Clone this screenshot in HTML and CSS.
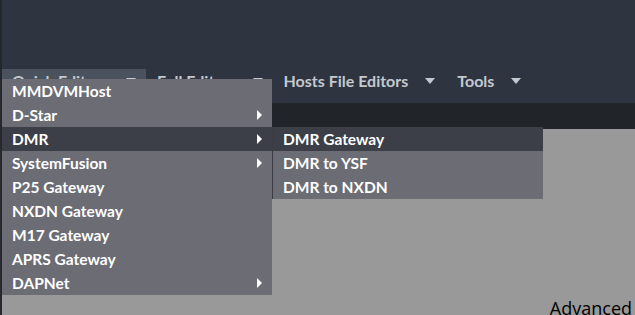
FILE: index.html
```html
<!DOCTYPE html>
<html>
<head>
<meta charset="utf-8">
<link rel="stylesheet" href="styles.css">
</head>
<body>
<div class="page">
  <div class="strip"></div>
  <div class="main">
    <div class="header"></div>
    <nav class="nav">
      <div class="nav-item active">Quick Editors <span class="caret"></span></div>
      <div class="nav-item">Full Editors <span class="caret"></span></div>
      <div class="nav-item">Hosts File Editors <span class="caret"></span></div>
      <div class="nav-item">Tools <span class="caret"></span></div>
    </nav>
    <div class="band"></div>
    <div class="content">
      <div class="advanced">Advanced</div>
    </div>
  </div>
</div>
<ul class="menu">
  <li>MMDVMHost</li>
  <li>D-Star <span class="arrow"></span></li>
  <li class="hl">DMR <span class="arrow"></span></li>
  <li>SystemFusion <span class="arrow"></span></li>
  <li>P25 Gateway</li>
  <li>NXDN Gateway</li>
  <li>M17 Gateway</li>
  <li>APRS Gateway</li>
  <li>DAPNet <span class="arrow"></span></li>
</ul>
<ul class="menu sub">
  <li class="hl">DMR Gateway</li>
  <li>DMR to YSF</li>
  <li>DMR to NXDN</li>
</ul>
</body>
</html>
```
FILE: styles.css
```css
html, body {
  margin: 0;
  padding: 0;
  width: 635px;
  height: 315px;
  overflow: hidden;
  font-family: "Lato", "Noto Sans", sans-serif;
}
.page {
  display: flex;
  height: 315px;
}
.strip {
  width: 2px;
  background: #25282d;
}
.main {
  flex: 1;
  display: flex;
  flex-direction: column;
}
.header {
  height: 69px;
  background: #2e3540;
}
.nav {
  height: 34px;
  background: #2e3540;
  display: flex;
}
.nav-item {
  display: flex;
  align-items: center;
  padding: 0 10px;
  color: #c3c9cf;
  font-weight: 700;
  font-size: 16px;
  height: 23px;
  white-space: nowrap;
}
.nav-item:nth-child(2) { padding-left: 11px; }
.nav-item:nth-child(4) { padding-left: 12px; }
.nav-item.active {
  background: #4a525d;
  width: 124px;
  justify-content: space-between;
}
.caret {
  display: inline-block;
  width: 0;
  height: 0;
  border-left: 5px solid transparent;
  border-right: 5px solid transparent;
  border-top: 6px solid #c3c9cf;
  margin-left: 17px;
}
.band {
  height: 26px;
  background: #212429;
}
.content {
  flex: 1;
  background: #999999;
  display: flex;
  justify-content: flex-end;
  align-items: flex-end;
}
.advanced {
  font-family: "Open Sans", "Noto Sans", sans-serif;
  font-size: 18px;
  color: #000;
  line-height: 20px;
  margin-right: 3px;
  margin-bottom: -3px;
}
.menu {
  position: absolute;
  left: 2px;
  top: 79px;
  width: 270px;
  margin: 0;
  padding: 0;
  list-style: none;
  background: #6c6c74;
}
.menu li {
  height: 24px;
  display: flex;
  align-items: center;
  justify-content: space-between;
  padding: 0 10px;
  color: #fff;
  font-weight: 700;
  font-size: 15.5px;
}
.menu li.hl {
  background: #3c3f48;
}
.menu.sub {
  left: 272px;
  top: 127px;
  width: 270px;
  border-left: 1px solid #3a3d44;
}
.arrow {
  display: inline-block;
  width: 0;
  height: 0;
  border-top: 5px solid transparent;
  border-bottom: 5px solid transparent;
  border-left: 5px solid #fff;
}
```
